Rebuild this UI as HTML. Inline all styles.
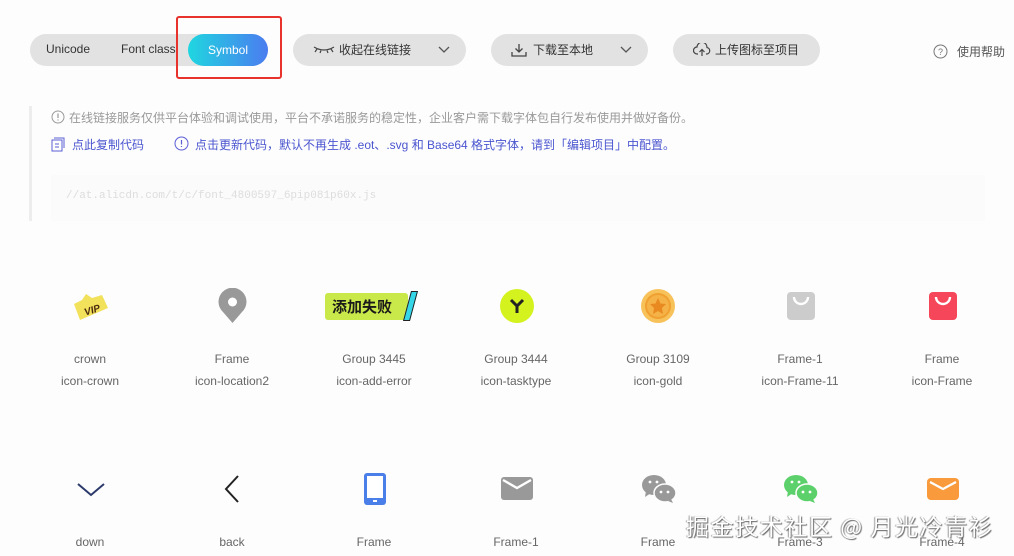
<!DOCTYPE html>
<html><head><meta charset="utf-8"><style>
*{margin:0;padding:0;box-sizing:border-box}
body{width:1014px;height:556px;overflow:hidden;background:#fdfdfd;font-family:"Liberation Sans","Noto Sans CJK SC",sans-serif;position:relative;color:#555}
.abs{position:absolute}
.pill{position:absolute;top:34px;height:32px;border-radius:16px;background:#e2e2e2;font-size:12px;color:#333;line-height:32px}
.t{position:absolute;white-space:nowrap}
.cell{position:absolute;width:142px;text-align:center;font-size:12px;color:#666;line-height:22px}
.ic{position:absolute;left:50%;transform:translateX(-50%)}
</style></head><body>
<div class="pill" style="left:30px;width:238px"></div>
<div class="t" style="left:46px;top:42px;font-size:12px;color:#333">Unicode</div>
<div class="t" style="left:121px;top:42px;font-size:12px;color:#333">Font class</div>
<div class="abs" style="left:188px;top:34px;width:80px;height:32px;border-radius:16px;background:linear-gradient(90deg,#1fd6e0,#4b7cf0);color:#fff;font-size:12px;line-height:32px;text-align:center">Symbol</div>
<div class="abs" style="left:176px;top:16px;width:106px;height:63px;border:2px solid #e8322c;border-radius:3px"></div>

<div class="pill" style="left:293px;width:173px">
 <svg class="abs" style="left:20px;top:10px" width="22" height="10" viewBox="0 0 22 10"><path d="M1 3 Q11 9 21 3 M4 5 L2 8 M8 6.5 L7 9 M14 6.5 L15 9 M18 5 L20 8" stroke="#444" stroke-width="1.2" fill="none"/></svg>
 <span class="t" style="left:46px;top:0">收起在线链接</span>
 <svg class="abs" style="left:145px;top:12px" width="12" height="8"><path d="M1 1 L6 6 L11 1" stroke="#555" stroke-width="1.3" fill="none"/></svg>
</div>
<div class="pill" style="left:491px;width:157px">
 <svg class="abs" style="left:20px;top:9px" width="16" height="14"><path d="M8 1 V9 M4.5 5.5 L8 9 L11.5 5.5 M1 9 V13 H15 V9" stroke="#444" stroke-width="1.3" fill="none"/></svg>
 <span class="t" style="left:42px;top:0">下载至本地</span>
 <svg class="abs" style="left:129px;top:12px" width="12" height="8"><path d="M1 1 L6 6 L11 1" stroke="#555" stroke-width="1.3" fill="none"/></svg>
</div>
<div class="pill" style="left:673px;width:147px">
 <svg class="abs" style="left:20px;top:9px" width="18" height="14"><path d="M5 11 H4 A3.5 3.5 0 0 1 4 4 A5 5 0 0 1 14 4.5 A3.3 3.3 0 0 1 14 11 H13 M9 13 V6.5 M6.5 9 L9 6.5 L11.5 9" stroke="#444" stroke-width="1.2" fill="none"/></svg>
 <span class="t" style="left:42px;top:0">上传图标至项目</span>
</div>
<svg class="abs" style="left:933px;top:44px" width="15" height="15"><circle cx="7.5" cy="7.5" r="6.5" stroke="#777" fill="none"/><text x="7.5" y="11" font-size="9" text-anchor="middle" fill="#777" font-family="Liberation Sans">?</text></svg>
<div class="t" style="left:957px;top:43px;font-size:12px;color:#555">使用帮助</div>

<div class="abs" style="left:29px;top:106px;width:3px;height:115px;background:#ededed"></div>
<svg class="abs" style="left:51px;top:110px" width="14" height="14"><circle cx="7" cy="7" r="6" stroke="#999" fill="none"/><path d="M7 3.5 V8 M7 9.5 V10.5" stroke="#999" stroke-width="1.2"/></svg>
<div class="t" style="left:69px;top:109px;font-size:12px;color:#999">在线链接服务仅供平台体验和调试使用，平台不承诺服务的稳定性，企业客户需下载字体包自行发布使用并做好备份。</div>
<svg class="abs" style="left:51px;top:137px" width="14" height="15"><rect x="1" y="3" width="10" height="11" stroke="#5b5fd6" fill="none"/><path d="M3 1 H13 V11 M4 7 H8 M4 10 H8" stroke="#5b5fd6" fill="none"/></svg>
<div class="t" style="left:72px;top:136px;font-size:12px;color:#4a55d0">点此复制代码</div>
<svg class="abs" style="left:174px;top:136px" width="15" height="15"><circle cx="7.5" cy="7.5" r="6.5" stroke="#5b5fd6" fill="none"/><path d="M7.5 4 V8.5 M7.5 10 V11" stroke="#5b5fd6" stroke-width="1.2"/></svg>
<div class="t" style="left:195px;top:136px;font-size:12px;color:#4a55d0">点击更新代码，默认不再生成 .eot、.svg 和 Base64 格式字体，请到「编辑项目」中配置。</div>
<div class="abs" style="left:51px;top:175px;width:934px;height:46px;background:#fbfbfb"></div>
<div class="t" style="left:66px;top:190px;font-size:11px;color:#ddd;font-family:'Liberation Mono',monospace">//at.alicdn.com/t/c/font_4800597_6pip081p60x.js</div>

<div class="cell" style="left:19px;top:348px">crown<br>icon-crown</div>
<svg class="abs" style="left:70px;top:290px" width="42" height="36" viewBox="0 0 42 36"><path d="M4 14 L12 10 L16 4 L22 8 L32 5 L38 18 L10 30 Z" fill="#f2e15a"/><text x="14" y="24" font-size="10" font-weight="bold" font-style="italic" fill="#4a2a10" transform="rotate(-18 20 20)" font-family="Liberation Sans">VIP</text></svg>
<div class="cell" style="left:161px;top:348px">Frame<br>icon-location2</div>
<svg class="abs" style="left:217px;top:288px" width="31" height="36" viewBox="0 0 31 36"><path d="M15.5 35 L6 24 A14 14 0 1 1 25 24 Z" fill="#999"/><circle cx="15.5" cy="14" r="4.5" fill="#fff"/></svg>
<div class="cell" style="left:303px;top:348px">Group 3445<br>icon-add-error</div>
<div class="abs" style="left:325px;top:293px;width:83px;height:27px;background:#c9e84a;border-radius:3px;font-size:15px;font-weight:bold;color:#1a1a1a;line-height:27px;padding-left:7px;font-family:'Noto Sans CJK SC',sans-serif">添加失败</div>
<div class="abs" style="left:407px;top:291px;width:7px;height:30px;background:#35d6e8;transform:skewX(-15deg);border:1px solid #222"></div>
<div class="cell" style="left:445px;top:348px">Group 3444<br>icon-tasktype</div>
<svg class="abs" style="left:499px;top:288px" width="36" height="36"><circle cx="18" cy="18" r="17" fill="#d4f21e"/><path d="M12 12 L18 18 L24 12 M18 18 V25" stroke="#222" stroke-width="3" fill="none"/></svg>
<div class="cell" style="left:587px;top:348px">Group 3109<br>icon-gold</div>
<svg class="abs" style="left:640px;top:288px" width="36" height="36"><circle cx="18" cy="18" r="17" fill="#f8c25a"/><circle cx="18" cy="18" r="13" fill="#f0a030"/><circle cx="18" cy="18" r="11" fill="#f5b247"/><path d="M18 10 L20.5 15.5 L26 16 L22 20 L23 26 L18 23 L13 26 L14 20 L10 16 L15.5 15.5 Z" fill="#e88a20"/></svg>
<div class="cell" style="left:729px;top:348px">Frame-1<br>icon-Frame-11</div>
<svg class="abs" style="left:786px;top:292px" width="30" height="28"><rect x="1" y="0" width="28" height="28" rx="4" fill="#ccc"/><path d="M8 5 A7 7 0 0 0 22 5" stroke="#fff" stroke-width="2.4" fill="none"/></svg>
<div class="cell" style="left:871px;top:348px">Frame<br>icon-Frame</div>
<svg class="abs" style="left:928px;top:292px" width="30" height="28"><rect x="1" y="0" width="28" height="28" rx="4" fill="#f5465a"/><path d="M8 5 A7 7 0 0 0 22 5" stroke="#fff" stroke-width="2.4" fill="none"/></svg>

<svg class="abs" style="left:77px;top:483px" width="28" height="14"><path d="M1 1 L14 12 L27 1" stroke="#2c3a6b" stroke-width="2" fill="none"/></svg>
<div class="cell" style="left:19px;top:531px">down</div>
<svg class="abs" style="left:224px;top:475px" width="16" height="28"><path d="M14 1 L2 14 L14 27" stroke="#222" stroke-width="2" fill="none"/></svg>
<div class="cell" style="left:161px;top:531px">back</div>
<svg class="abs" style="left:364px;top:473px" width="22" height="32"><rect x="0" y="0" width="22" height="32" rx="3" fill="#4a7ee8"/><rect x="3" y="3" width="16" height="22" fill="#fff"/><rect x="9" y="27" width="4" height="2" fill="#fff"/></svg>
<div class="cell" style="left:303px;top:531px">Frame</div>
<svg class="abs" style="left:501px;top:477px" width="32" height="23"><rect width="32" height="23" rx="3" fill="#999"/><path d="M2 3 L16 11 L30 3" stroke="#fff" stroke-width="2.4" fill="none"/></svg>
<div class="cell" style="left:445px;top:531px">Frame-1</div>
<svg class="abs" style="left:641px;top:474px" width="36" height="30"><ellipse cx="13" cy="11" rx="12" ry="10" fill="#999"/><path d="M5 17 L4 23 L10 19Z" fill="#999"/><ellipse cx="24" cy="19" rx="11" ry="9" fill="#999" stroke="#fdfdfd" stroke-width="1.5"/><path d="M30 25 L32 29 L27 27Z" fill="#999"/><circle cx="9" cy="8" r="1.4" fill="#fff"/><circle cx="16" cy="8" r="1.4" fill="#fff"/><circle cx="20" cy="18" r="1.4" fill="#fff"/><circle cx="27" cy="18" r="1.4" fill="#fff"/></svg>
<div class="cell" style="left:587px;top:531px">Frame</div>
<svg class="abs" style="left:783px;top:474px" width="36" height="30"><ellipse cx="13" cy="11" rx="12" ry="10" fill="#5cd06a"/><path d="M5 17 L4 23 L10 19Z" fill="#5cd06a"/><ellipse cx="24" cy="19" rx="11" ry="9" fill="#5cd06a" stroke="#fdfdfd" stroke-width="1.5"/><path d="M30 25 L32 29 L27 27Z" fill="#5cd06a"/><circle cx="9" cy="8" r="1.4" fill="#fff"/><circle cx="16" cy="8" r="1.4" fill="#fff"/><circle cx="20" cy="18" r="1.4" fill="#fff"/><circle cx="27" cy="18" r="1.4" fill="#fff"/></svg>
<div class="cell" style="left:729px;top:531px">Frame-3</div>
<svg class="abs" style="left:927px;top:478px" width="32" height="22"><rect width="32" height="22" rx="4" fill="#f99a3c"/><path d="M3 4 L16 11 L29 4" stroke="#fff" stroke-width="2.2" fill="none"/></svg>
<div class="cell" style="left:871px;top:531px">Frame-4</div>

<div class="t" style="left:686px;top:508px;font-size:23px;color:#fff;text-shadow:1px 1px 1px #666,-1px 0 1px #999;font-family:'Noto Sans CJK SC',sans-serif;letter-spacing:1.6px">掘金技术社区 @ 月光冷青衫</div>
</body></html>
